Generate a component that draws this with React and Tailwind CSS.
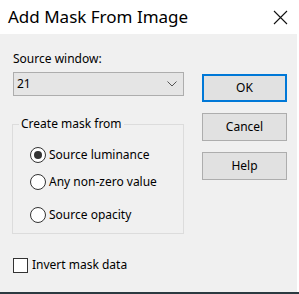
import React from 'react';

const font = { fontFamily: '"Noto Sans", "Liberation Sans", sans-serif' };

const Radio = ({ checked, label }) => (
  <label className="flex items-center gap-[3px] text-[12px] leading-[16px] text-black">
    <span className="w-[16px] h-[16px] rounded-full border border-[#333] bg-white flex items-center justify-center">
      {checked && <span className="w-[8px] h-[8px] rounded-full bg-[#333]" />}
    </span>
    {label}
  </label>
);

const Button = ({ children, primary }) => (
  <button
    className={`w-[85px] h-[28px] bg-[#e1e1e1] text-[12px] text-black ${primary ? 'border-2 border-[#0078d7]' : 'border border-[#adadad]'}`}
  >
    {children}
  </button>
);

export default function App() {
  return (
    <div className="w-[299px] h-[294px] bg-white flex flex-col" style={font}>
      {/* Title bar */}
      <div className="h-[34px] flex items-center justify-between pl-[8px] pr-[10px]">
        <span className="text-[17px] text-black leading-none pb-[2px]">Add Mask From Image</span>
        <svg width="15" height="15" viewBox="0 0 15 15" className="mr-[1px]">
          <path d="M1 1 L14 14 M14 1 L1 14" stroke="#111" strokeWidth="1.1" />
        </svg>
      </div>

      {/* Body */}
      <div className="w-[297px] h-[258px] bg-[#f0f0f0] flex">
        <div className="w-[185px] pl-[12px] pt-[16px] flex flex-col">
          <span className="text-[12px] leading-[17px] text-black pl-[1px]">Source window:</span>
          <div className="mt-[5px] ml-[1px] w-[171px] h-[24px] bg-[#e5e5e5] border border-[#adadad] flex items-center justify-between pl-[3px] pr-[6px]">
            <span className="text-[12px] text-black">21</span>
            <svg width="10" height="6" viewBox="0 0 10 6">
              <path d="M0.5 0.5 L5 5 L9.5 0.5" stroke="#555" fill="none" strokeWidth="1" />
            </svg>
          </div>

          <fieldset className="mt-[20px] w-[172px] h-[118px] border border-[#dcdcdc] flex flex-col">
            <legend className="ml-[6px] px-[2px] text-[12px] leading-[16px] text-black">Create mask from</legend>
            <div className="flex flex-col gap-[11px] pt-[15px] pl-[17px]">
              <Radio checked label="Source luminance" />
              <Radio label="Any non-zero value" />
              <div className="pt-[6px]">
                <Radio label="Source opacity" />
              </div>
            </div>
          </fieldset>

          <label className="mt-[22px] ml-[1px] flex items-center gap-[4px] text-[12px] text-black">
            <span className="w-[15px] h-[15px] border border-[#333] bg-white" />
            Invert mask data
          </label>
        </div>

        <div className="flex flex-col gap-[11px] pt-[40px] pl-[17px]">
          <Button primary>OK</Button>
          <Button>Cancel</Button>
          <Button>Help</Button>
        </div>
      </div>

      <div className="flex-1" />
      <div className="h-[2px] bg-[#2b3a40]" />
    </div>
  );
}
